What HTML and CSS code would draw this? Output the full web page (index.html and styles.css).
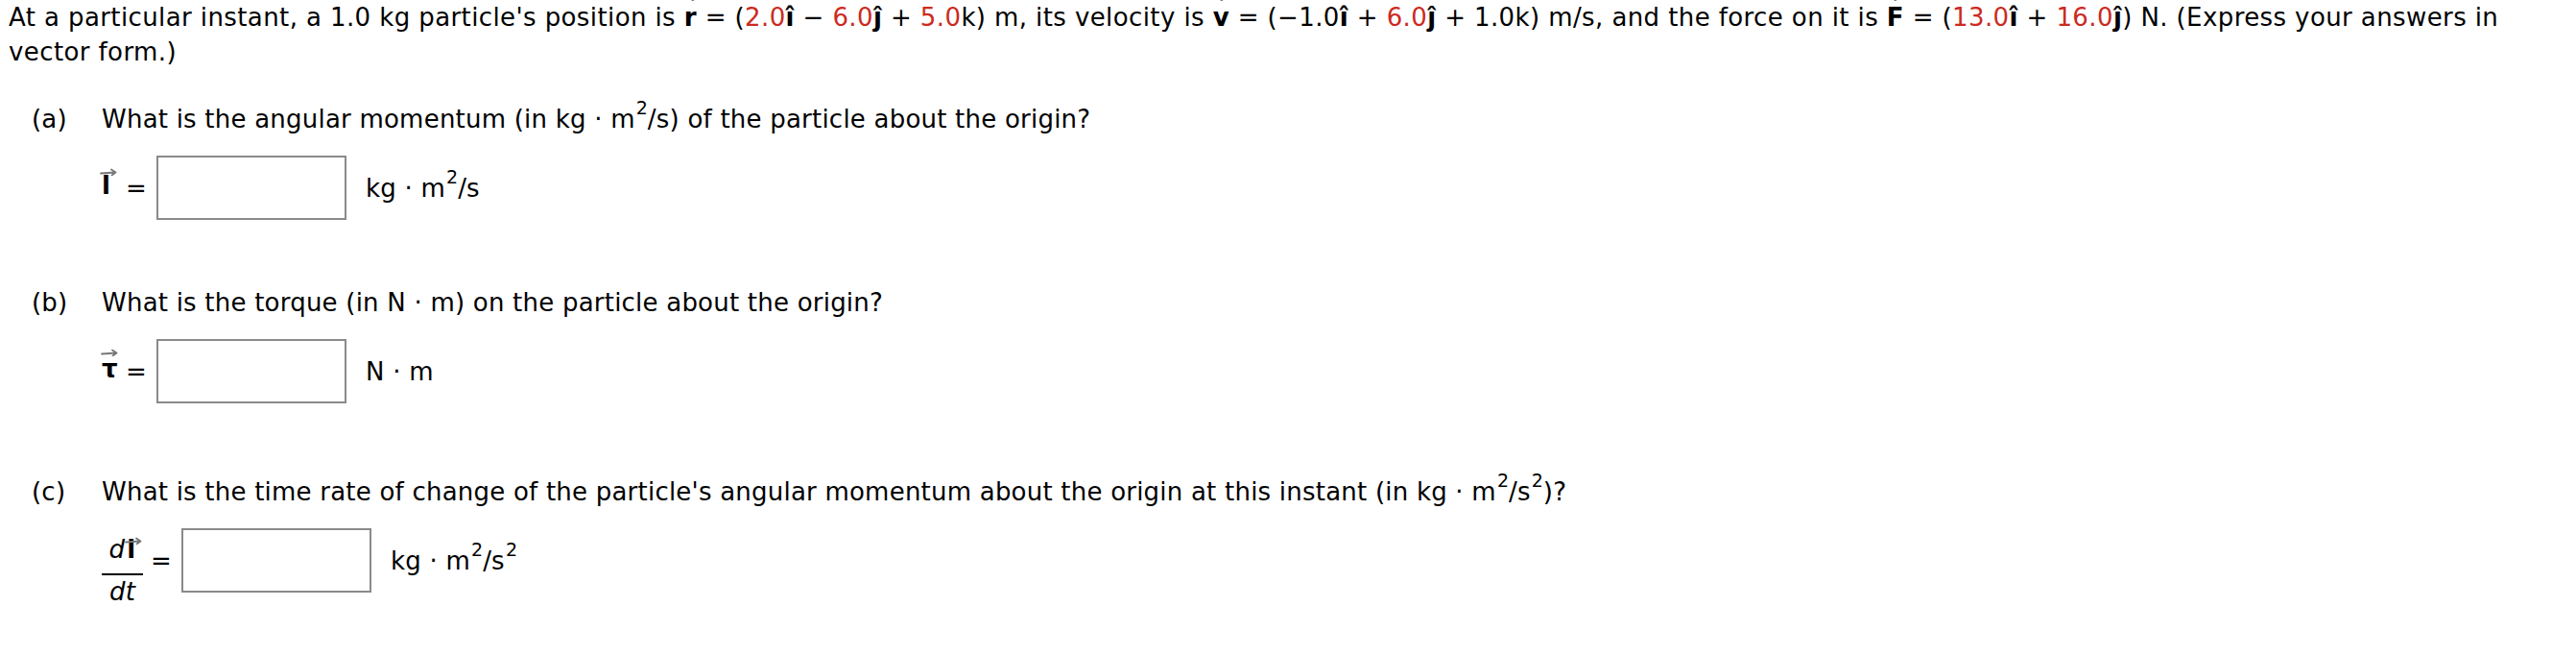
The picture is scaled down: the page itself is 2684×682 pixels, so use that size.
FILE: index.html
```html
<!DOCTYPE html>
<html lang="en">
<head>
<meta charset="utf-8">
<title>Angular momentum</title>
<link rel="stylesheet" href="styles.css">
</head>
<body>
<div class="question">
  <p class="intro">At a particular instant, a 1.0 kg particle's position is <span class="vec top"><b>r</b><svg class="arrow" viewBox="0 0 18 8" width="18" height="8"><path d="M1 5.5 L16 4.5 M12 1.5 L16.5 4.5 L12.5 7.5"/></svg></span> = (<span class="red">2.0</span><b>î</b> − <span class="red">6.0</span><b>ĵ</b> + <span class="red">5.0</span>k) m, its velocity is <span class="vec top"><b>v</b><svg class="arrow" viewBox="0 0 18 8" width="18" height="8"><path d="M1 5.5 L16 4.5 M12 1.5 L16.5 4.5 L12.5 7.5"/></svg></span> = (−1.0<b>î</b> + <span class="red">6.0</span><b>ĵ</b> + 1.0k) m/s, and the force on it is <span class="vec top"><b>F</b><svg class="arrow" viewBox="0 0 18 8" width="18" height="8"><path d="M1 5.5 L16 4.5 M12 1.5 L16.5 4.5 L12.5 7.5"/></svg></span> = (<span class="red">13.0</span><b>î</b> + <span class="red">16.0</span><b>ĵ</b>) N. (Express your answers in vector form.)</p>

  <div class="part part-a">
    <div class="prompt"><span class="label">(a)</span><span class="text">What is the angular momentum (in kg · m<sup>2</sup>/s) of the particle about the origin?</span></div>
    <div class="answer">
      <span class="sym"><span class="vec"><b>l</b><svg class="arrow" viewBox="0 0 18 8" width="18" height="8"><path d="M1 5.5 L16 4.5 M12 1.5 L16.5 4.5 L12.5 7.5"/></svg></span></span>
      <span class="eq">=</span>
      <span class="box"></span>
      <span class="unit">kg · m<sup>2</sup>/s</span>
    </div>
  </div>

  <div class="part part-b">
    <div class="prompt"><span class="label">(b)</span><span class="text">What is the torque (in N · m) on the particle about the origin?</span></div>
    <div class="answer">
      <span class="sym"><span class="vec tau"><b>τ</b><svg class="arrow" viewBox="0 0 18 8" width="18" height="8"><path d="M1 5.5 L16 4.5 M12 1.5 L16.5 4.5 L12.5 7.5"/></svg></span></span>
      <span class="eq">=</span>
      <span class="box"></span>
      <span class="unit">N · m</span>
    </div>
  </div>

  <div class="part part-c">
    <div class="prompt"><span class="label">(c)</span><span class="text">What is the time rate of change of the particle's angular momentum about the origin at this instant (in kg · m<sup>2</sup>/s<sup>2</sup>)?</span></div>
    <div class="answer">
      <span class="frac">
        <span class="num"><i>d</i><span class="vec"><b>l</b><svg class="arrow" viewBox="0 0 18 8" width="18" height="8"><path d="M1 5.5 L16 4.5 M12 1.5 L16.5 4.5 L12.5 7.5"/></svg></span></span>
        <span class="den"><i>dt</i></span>
      </span>
      <span class="eq eq-frac">=</span>
      <span class="box"></span>
      <span class="unit">kg · m<sup>2</sup>/s<sup>2</sup></span>
    </div>
  </div>
</div>
</body>
</html>
```

FILE: styles.css
```css
html, body {
  margin: 0;
  padding: 0;
  background: #ffffff;
}

body {
  font-family: "DejaVu Sans", Verdana, "Liberation Sans", sans-serif;
  font-size: 26px;
  letter-spacing: 0.22px;
  color: #000000;
}

.question {
  padding-left: 9px;
  line-height: 36px;
}

.intro {
  margin: 0;
  max-width: 2620px;
  letter-spacing: 0.4px;
}

.red {
  color: #cc2a1e;
}

b {
  font-weight: bold;
}

sup {
  font-size: 19px;
  line-height: 0;
  vertical-align: 14px;
  letter-spacing: 0;
  margin-left: 1px;
}

.vec {
  position: relative;
  display: inline-block;
}

.vec .arrow {
  position: absolute;
  left: -2px;
  top: 0;
  fill: none;
  stroke: #777777;
  stroke-width: 1.8;
  stroke-linecap: round;
  stroke-linejoin: round;
}

.vec.top .arrow {
  top: -7px;
  left: -4px;
}

.vec.tau .arrow {
  top: -3px;
  left: -1px;
}

.part {
  padding-left: 24px;
}

.part-a {
  margin-top: 34px;
}

.part-b {
  margin-top: 68px;
}

.part-c {
  margin-top: 74px;
}

.prompt {
  display: flex;
}

.label {
  flex: 0 0 73px;
}

.answer {
  display: flex;
  align-items: center;
  margin-top: 20px;
  padding-left: 73px;
}

.part-c .answer {
  margin-top: 8px;
}

.sym {
  width: 25px;
  position: relative;
  top: -3px;
}

.eq {
  margin-right: 10px;
}

.box {
  box-sizing: border-box;
  width: 198px;
  height: 67px;
  border: 2px solid #8a8a8a;
  background: #ffffff;
}

.unit {
  margin-left: 20px;
}

.frac {
  display: flex;
  flex-direction: column;
  align-items: stretch;
  width: 43px;
  margin-top: 21px;
  margin-right: 8px;
  text-align: center;
}

.num {
  line-height: 26px;
  padding-bottom: 12px;
  border-bottom: 2px solid #000000;
}

.num i {
  margin-right: 2px;
}

.den {
  line-height: 26px;
  padding-top: 4px;
}

.eq-frac {
  margin-right: 10px;
}
```
